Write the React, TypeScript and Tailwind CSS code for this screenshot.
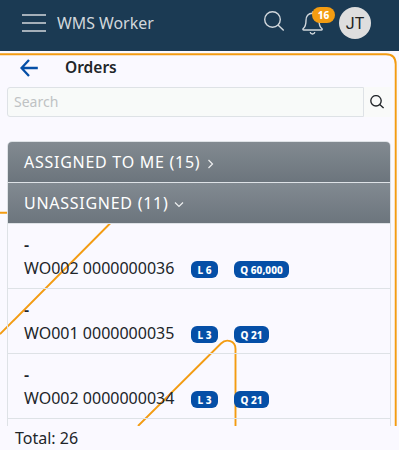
import React from "react";

type Order = { id: string; lines: string; quantity: string };

const orders: Order[] = [
  { id: "WO002 0000000036", lines: "L 6", quantity: "Q 60,000" },
  { id: "WO001 0000000035", lines: "L 3", quantity: "Q 21" },
  { id: "WO002 0000000034", lines: "L 3", quantity: "Q 21" },
];

function TopBar() {
  return (
    <header className="flex h-[51px] w-[399px] shrink-0 items-start bg-[#1b3a53] pl-[22px]">
      <svg className="mt-[13px] h-5 w-6" viewBox="0 0 24 20" stroke="#a4afb9" strokeWidth="1.8" fill="none">
        <path d="M0 2h24M0 10h24M0 18h24" />
      </svg>
      <span className="mt-[11px] ml-[11px] w-[196px] text-[15.9px] leading-6 text-[#d1d7dc]">WMS Worker</span>
      <svg className="mt-[11px] ml-[11px] h-5 w-5" viewBox="0 0 20 20" fill="none" stroke="#d1d7dc" strokeWidth="1.4">
        <circle cx="8.500" cy="8.500" r="7.800" />
        <path d="M14 14l5.700 5.500" />
      </svg>
      <div className="relative mt-[11px] ml-[18px] h-6 w-[21px]">
        <svg className="h-6 w-[21px]" viewBox="0 0 21 24" fill="none" stroke="#d1d7dc" strokeWidth="1.4" strokeLinejoin="round">
          <path d="M10.500 1v1.200c-4.300 0-6.500 3-6.500 7.200 0 4.800-1 6.500-2.700 8.100-.7.700-.4 1.500.5 1.500h17.500c.9 0 1.200-.8.500-1.500-1.700-1.600-2.800-3.300-2.800-8.100 0-4.200-2.200-7.200-6.500-7.200z" />
          <path d="M8.200 21c.2 1.200 1.100 2 2.300 2s2.100-.8 2.300-2" />
        </svg>
        <span className="absolute -top-1 left-[10px] flex h-4 w-[23px] items-center justify-center rounded-full bg-[#f39c12] text-[10px] leading-none font-extrabold text-white">16</span>
      </div>
      <div className="mt-[7px] ml-[16px] flex h-8 w-8 items-center justify-center rounded-full bg-[#dedede] pt-px text-[16px] leading-none text-[#222] [font-family:Roboto,sans-serif]">JT</div>
    </header>
  );
}

function Backdrop() {
  return (
    <svg className="pointer-events-none absolute top-0 left-0 h-[375px] w-[400px]" viewBox="0 51 400 375" fill="none" stroke="#f39c12" strokeWidth="1.9">
      <path d="M0 54.2h386q9.7 0 9.7 10V426" />
      <path d="M0 212.7h7M110.5 223L0 334.2" />
      <path d="M138 426l83-82.5c5.500-5.500 14.500-2.500 14.500 5.500V426" />
    </svg>
  );
}

function Group({ title, open }: { title: string; open?: boolean }) {
  return (
    <div className="flex h-[41px] items-center border-b border-[#dee2e6] bg-linear-to-b from-[#828a91] to-[#6c757d] pl-4 text-[16px] tracking-[0.73px] text-white">
      <span>{title}</span>
      <svg className="mt-[3px] ml-[6px] h-[10px] w-[10px]" viewBox="0 0 10 10" fill="none" stroke="#eeeff0" strokeWidth="1.2">
        <path d={open ? "M1 2.500l4 4 4-4" : "M2.500 1l4 4-4 4"} />
      </svg>
    </div>
  );
}

function Badge({ className, children }: { className: string; children: string }) {
  return (
    <span className={`flex h-[17px] items-center justify-center rounded-[6px] bg-[#054fa7] pt-px text-[10px] leading-none font-extrabold text-white ${className}`}>{children}</span>
  );
}

function OrderRow({ order }: { order: Order }) {
  return (
    <div className="h-[65px] border-b border-[#dee2e6] px-4 pt-[9px] text-[16px] leading-6">
      <div className="h-[23px] font-semibold">-</div>
      <div className="flex items-center">
        <span className="w-[167px]">{order.id}</span>
        <Badge className="mt-[3px] w-[27px]">{order.lines}</Badge>
        <Badge className={`mt-[3px] ml-4 ${order.quantity.length > 4 ? "w-[55px]" : "w-[35px]"}`}>{order.quantity}</Badge>
      </div>
    </div>
  );
}

export default function App() {
  return (
    <div className="h-[450px] w-[400px] overflow-hidden bg-white text-[#212529] [font-family:'Noto_Sans',sans-serif]">
      <TopBar />
      <main className="relative h-[399px] w-[399px] bg-[#faf9ff]">
        <Backdrop />
        <div className="relative flex h-[375px] flex-col overflow-hidden">
          <div className="flex h-9 shrink-0 items-start pt-[5px] pl-5">
            <svg className="mt-[3px] h-[18px] w-[18px]" viewBox="0 0 18 18" fill="none" stroke="#054fa7" strokeWidth="2.3">
              <path d="M17.800 9H1.700M9 1L1.500 9 9 17" />
            </svg>
            <h1 className="ml-[27px] text-[15.5px] leading-[23px] font-semibold">Orders</h1>
          </div>
          <div className="ml-[7px] flex h-[30px] w-[384px] shrink-0">
            <input className="h-[30px] w-[357px] rounded-l-[3px] border border-[#dee2e6] bg-[#f8faf9] px-1.5 pb-0.5 text-[14px] placeholder:text-[#bfc2c4]" placeholder="Search" />
            <button className="flex w-[27px] items-center justify-center bg-[#f9faf9] pr-0.5">
              <svg className="h-[14px] w-[14px]" viewBox="0 0 14 14" fill="none" stroke="#212529" strokeWidth="1.35">
                <circle cx="6" cy="5.800" r="5.200" />
                <path d="M9.700 9.500l3.900 3.600" />
              </svg>
            </button>
          </div>
          <section className="mt-6 ml-[7px] w-[384px] shrink-0 overflow-hidden rounded-t-[5px] border border-[#dee2e6]">
            <Group title="ASSIGNED TO ME (15)" />
            <Group title="UNASSIGNED (11)" open />
            {orders.map((order) => <OrderRow key={order.id} order={order} />)}
            <div className="h-16" />
          </section>
        </div>
        <footer className="pl-[15px] text-[16px] leading-6">Total: 26</footer>
      </main>
    </div>
  );
}
